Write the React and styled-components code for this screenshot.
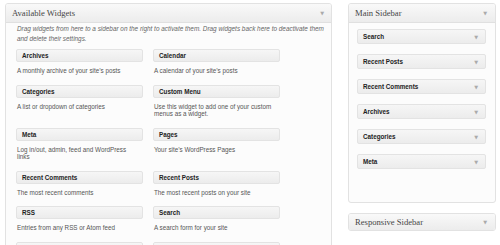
import React from "react";
import styled, { createGlobalStyle } from "styled-components";

const Global = createGlobalStyle`
  html, body { margin: 0; padding: 0; background: #ffffff; }
  body { font-family: "Liberation Sans", Arial, sans-serif; color: #333; overflow: hidden; }
`;

const Page = styled.div`
  display: flex;
  align-items: flex-start;
  gap: 16px;
  padding: 3px 0 0 5px;
  width: 500px;
  height: 245px;
  box-sizing: border-box;
  overflow: hidden;
`;

const Panel = styled.section`
  width: ${(p) => p.$w}px;
  box-sizing: border-box;
  border: 1px solid #e2e2e2;
  border-radius: 3px;
  background: #fcfcfc;
  overflow: hidden;
`;

const PanelHeader = styled.div`
  height: ${(p) => p.$h || 18}px;
  display: flex;
  align-items: center;
  justify-content: space-between;
  padding: 0 6px 0 6px;
  background: linear-gradient(to bottom, #f9f9f9, #ececec);
  border-bottom: ${(p) => (p.$open ? "1px solid #e0e0e0" : "none")};
  font-family: "Liberation Serif", "Times New Roman", serif;
  font-size: 8.6px;
  color: #464646;
`;

const Arrow = styled.span`
  font-family: "DejaVu Sans", sans-serif;
  font-size: 5px;
  color: #aaa;
  margin-right: ${(p) => p.$mr || 0}px;
`;

const Body = styled.div`
  padding: ${(p) => p.$pad};
`;

const Intro = styled.p`
  margin: 0 0 5px 0;
  font-style: italic;
  font-size: 6.4px;
  line-height: 10px;
  color: #666;
  white-space: nowrap;
`;

const Grid = styled.div`
  display: grid;
  grid-template-columns: 127px 127px;
  column-gap: 10px;
  margin-left: -1px;
`;

const Item = styled.div`
  margin-bottom: 10px;
`;

const WidgetBar = styled.div`
  height: ${(p) => p.$h || 13}px;
  box-sizing: border-box;
  display: flex;
  align-items: center;
  justify-content: space-between;
  padding: 0 7px 0 5px;
  border: 1px solid #e3e3e3;
  border-radius: 2px;
  background: linear-gradient(to bottom, #f6f6f6, #ececec);
  font-weight: bold;
  font-size: 6.3px;
  color: #222;
`;

const Desc = styled.div`
  margin-top: 5px;
  padding-left: 1px;
  font-size: 6.3px;
  line-height: 7.5px;
  color: #555;
  padding-right: 8px;
`;

const SideList = styled.div`
  display: flex;
  flex-direction: column;
  gap: 10px;
`;

const Column = styled.div`
  display: flex;
  flex-direction: column;
  gap: 10px;
`;

const available = [
  ["Archives", "A monthly archive of your site’s posts"],
  ["Calendar", "A calendar of your site’s posts"],
  ["Categories", "A list or dropdown of categories"],
  ["Custom Menu", "Use this widget to add one of your custom menus as a widget."],
  ["Meta", "Log in/out, admin, feed and WordPress links"],
  ["Pages", "Your site’s WordPress Pages"],
  ["Recent Comments", "The most recent comments"],
  ["Recent Posts", "The most recent posts on your site"],
  ["RSS", "Entries from any RSS or Atom feed"],
  ["Search", "A search form for your site"],
  ["Tag Cloud", "Your most used tags in cloud format"],
  ["Text", "Arbitrary text or HTML"],
];

const sidebar = ["Search", "Recent Posts", "Recent Comments", "Archives", "Categories", "Meta"];

export default function App() {
  return (
    <>
      <Global />
      <Page>
        <Panel $w={327} style={{ height: 260 }}>
          <PanelHeader $open $h={18}>
            <span>Available Widgets</span>
            <Arrow $mr={1}>▼</Arrow>
          </PanelHeader>
          <Body $pad="1px 0 0 11px">
            <Intro>
              Drag widgets from here to a sidebar on the right to activate them. Drag widgets back here to deactivate them
              <br />
              and delete their settings.
            </Intro>
            <Grid>
              {available.map(([t, d]) => (
                <Item key={t}>
                  <WidgetBar>
                    <span>{t}</span>
                  </WidgetBar>
                  <Desc>{d}</Desc>
                </Item>
              ))}
            </Grid>
          </Body>
        </Panel>
        <Column>
          <Panel $w={148}>
            <PanelHeader $open $h={18}>
              <span>Main Sidebar</span>
              <Arrow $mr={2}>▼</Arrow>
            </PanelHeader>
            <Body $pad="6px 9px 33px 8px">
              <SideList>
                {sidebar.map((t) => (
                  <WidgetBar key={t} $h={15}>
                    <span>{t}</span>
                    <Arrow>▼</Arrow>
                  </WidgetBar>
                ))}
              </SideList>
            </Body>
          </Panel>
          <Panel $w={148}>
            <PanelHeader $h={16}>
              <span>Responsive Sidebar</span>
              <Arrow $mr={2}>▼</Arrow>
            </PanelHeader>
          </Panel>
        </Column>
      </Page>
    </>
  );
}
